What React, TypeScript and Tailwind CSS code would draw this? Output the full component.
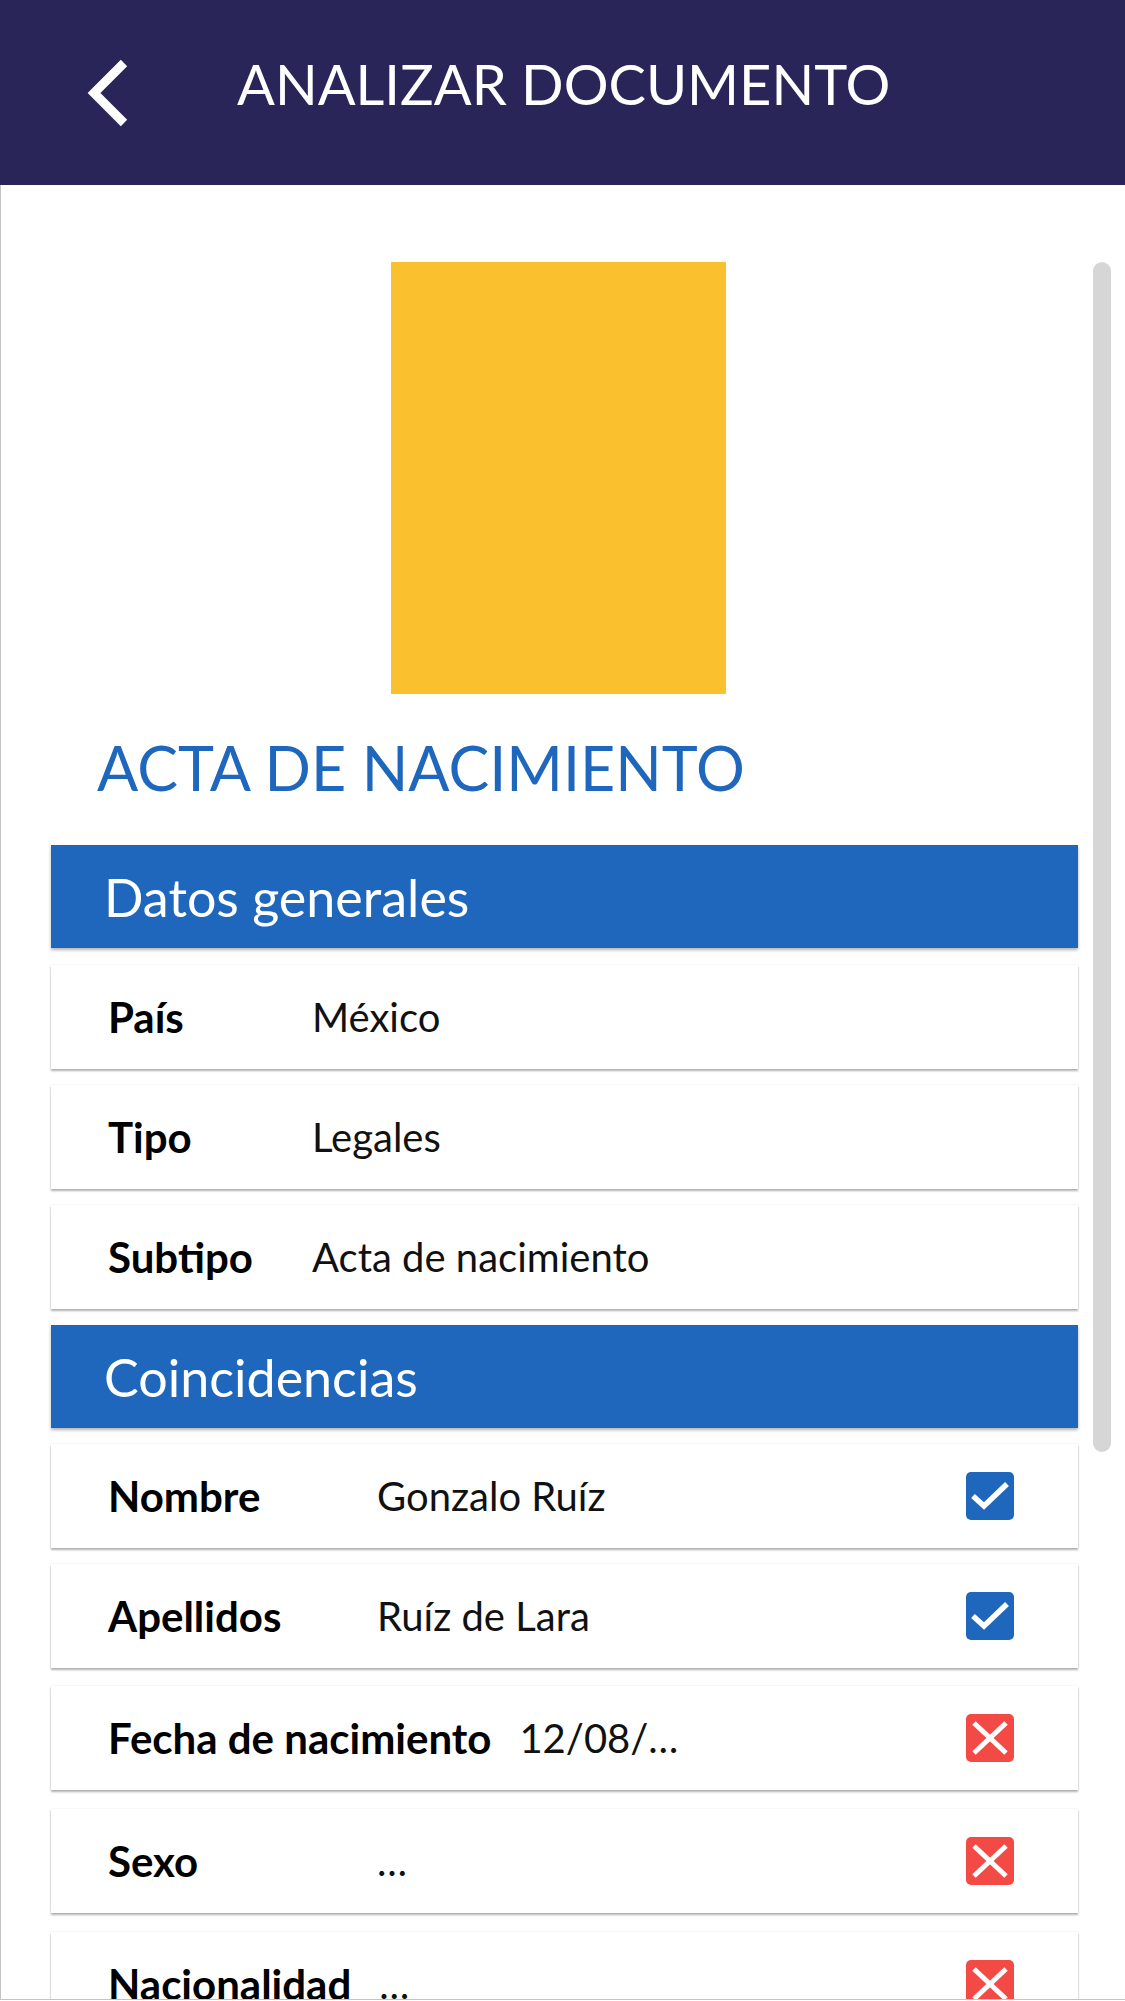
import React from "react";

const font = { fontFamily: "Lato, 'Liberation Sans', sans-serif" };

function Check() {
  return (
    <div className="w-[48px] h-[48px] rounded-[5px] bg-[#1f67bd] flex-none">
      <svg width="48" height="48" viewBox="0 0 48 48">
        <polyline points="7,24 18,34 41,12" fill="none" stroke="#fff" strokeWidth="5.5" />
      </svg>
    </div>
  );
}

function Cross() {
  return (
    <div className="w-[48px] h-[48px] rounded-[5px] bg-[#f44a45] flex-none">
      <svg width="48" height="48" viewBox="0 0 48 48">
        <line x1="8" y1="9" x2="40" y2="39" stroke="#fff" strokeWidth="5" />
        <line x1="40" y1="9" x2="8" y2="39" stroke="#fff" strokeWidth="5" />
      </svg>
    </div>
  );
}

const cardCls =
  "h-[104px] bg-white flex items-center pl-[57px] pr-[64px] shadow-[0_2px_2px_rgba(0,0,0,0.3),0_0_2px_rgba(0,0,0,0.1)]";

function DataRow({ label, value }: { label: string; value: string }) {
  return (
    <div className={cardCls}>
      <div className="min-w-[204px] pr-[40px] text-[42px] font-bold leading-none text-black">{label}</div>
      <div className="text-[40px] leading-none text-[#111]">{value}</div>
    </div>
  );
}

function MatchRow({ label, value, ok, mt }: { label: string; value: string; ok: boolean; mt: string }) {
  return (
    <div className={cardCls + " " + mt}>
      <div className="min-w-[269px] pr-[28px] text-[42px] font-bold leading-none text-black whitespace-nowrap">{label}</div>
      <div className="flex-1 text-[40px] leading-none text-[#111]">{value}</div>
      {ok ? <Check /> : <Cross />}
    </div>
  );
}

function Section({ title, mt }: { title: string; mt: string }) {
  return (
    <div
      className={
        "h-[103px] bg-[#1f67bd] flex items-center pl-[53px] text-white text-[52px] leading-none shadow-[0_2px_3px_rgba(0,0,0,0.3)] " +
        mt
      }
    >
      {title}
    </div>
  );
}

export default function App() {
  return (
    <div className="w-[1125px] h-[2001px] overflow-hidden bg-white" style={font}>
      <div className="h-[185px] bg-[#2a2559] flex items-start pl-[82px]">
        <svg width="48" height="70" viewBox="0 0 48 70" className="mt-[58px] flex-none">
          <polyline points="42,5 12,35 42,65" fill="none" stroke="#fff" strokeWidth="9" strokeLinejoin="miter" />
        </svg>
        <div className="mt-[56px] ml-[107px] text-white text-[56px] leading-none whitespace-nowrap">
          ANALIZAR DOCUMENTO
        </div>
      </div>
      <div className="relative h-[1815px] overflow-hidden border-l border-b border-[#c4c4c4] pl-[50px] pr-[47px]">
        <div className="absolute right-[14px] top-[77px] w-[18px] h-[1190px] rounded-full bg-[#d6d6d6]" />
        <div className="ml-[340px] mt-[77px] w-[335px] h-[432px] bg-[#fbc02d]" />
        <div className="ml-[46px] mt-[43px] text-[61px] leading-none text-[#1f67bd] whitespace-nowrap">
          ACTA DE NACIMIENTO
        </div>
        <div className="flex flex-col">
          <Section title="Datos generales" mt="mt-[47px]" />
          <div className="mt-[17px]" />
          <DataRow label="País" value="México" />
          <div className="mt-[16px]" />
          <DataRow label="Tipo" value="Legales" />
          <div className="mt-[16px]" />
          <DataRow label="Subtipo" value="Acta de nacimiento" />
          <Section title="Coincidencias" mt="mt-[16px]" />
          <MatchRow label="Nombre" value="Gonzalo Ruíz" ok mt="mt-[16px]" />
          <MatchRow label="Apellidos" value="Ruíz de Lara" ok mt="mt-[16px]" />
          <MatchRow label="Fecha de nacimiento" value="12/08/…" ok={false} mt="mt-[18px]" />
          <MatchRow label="Sexo" value="…" ok={false} mt="mt-[19px]" />
          <MatchRow label="Nacionalidad" value="…" ok={false} mt="mt-[19px]" />
        </div>
      </div>
    </div>
  );
}
